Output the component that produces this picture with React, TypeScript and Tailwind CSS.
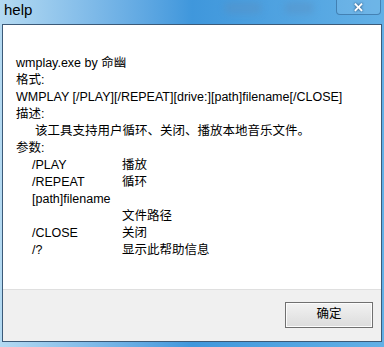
export default function App() {
  const font = { fontFamily: '"Liberation Sans", "Noto Sans CJK SC", sans-serif' };
  const params: [string, string][] = [
    ["/PLAY", "播放"],
    ["/REPEAT", "循环"],
    ["[path]filename", ""],
    ["", "文件路径"],
    ["/CLOSE", "关闭"],
    ["/?", "显示此帮助信息"],
  ];

  return (
    <div
      className="w-[384px] h-[347px] flex flex-col bg-gradient-to-r from-[#b4daf2] via-[#3f97dc] to-[#62b0e6] overflow-hidden"
      style={font}
    >
      {/* title bar */}
      <div className="h-[24px] flex items-start justify-between pl-[4px] pr-[3px]">
        <span className="text-[15px] leading-[20px] text-black">help</span>
        <div className="flex items-start gap-[22px]">
          <div className="w-[38px] h-[12px] mt-[2px] rounded-full bg-[#5b8fc0]/40 blur-[3px]" />
          <div className="w-[30px] h-[12px] mt-[2px] rounded-full bg-[#5b8fc0]/40 blur-[3px]" />
          <div className="w-[45px] h-[15px] rounded-b-[4px] border border-t-0 border-[#2a5f8f]/60 bg-[#8cc4ec]/30 flex items-center justify-center">
            <span className="text-white text-[13px] font-bold leading-none drop-shadow-[0_0_1px_#1d3f66]">✕</span>
          </div>
        </div>
      </div>

      {/* client area */}
      <div className="mx-[2px] mb-[5px] flex-1 flex flex-col border border-[#3c5a78] bg-white">
        <div className="flex-1 pt-[30px] pl-[13px] text-[12.5px] leading-[17px] text-black">
          <div>wmplay.exe by 命幽</div>
          <div>格式:</div>
          <div>WMPLAY [/PLAY][/REPEAT][drive:][path]filename[/CLOSE]</div>
          <div>描述:</div>
          <div className="pl-[19px]">该工具支持用户循环、关闭、播放本地音乐文件。</div>
          <div>参数:</div>
          {params.map(([k, v], i) => (
            <div key={i} className="flex pl-[16px] h-[17px]">
              <span className="w-[90px]">{k}</span>
              <span>{v}</span>
            </div>
          ))}
        </div>
        <div className="h-[52px] bg-[#f0f0f0] border-t border-[#dfdfdf] flex items-center justify-end pr-[8px]">
          <button className="w-[88px] h-[26px] mt-[-2px] border border-[#707070] bg-gradient-to-b from-[#f2f2f2] to-[#dcdcdc] text-[12.5px] text-black shadow-[inset_0_0_0_1px_#fcfcfc]">
            确定
          </button>
        </div>
      </div>
    </div>
  );
}
